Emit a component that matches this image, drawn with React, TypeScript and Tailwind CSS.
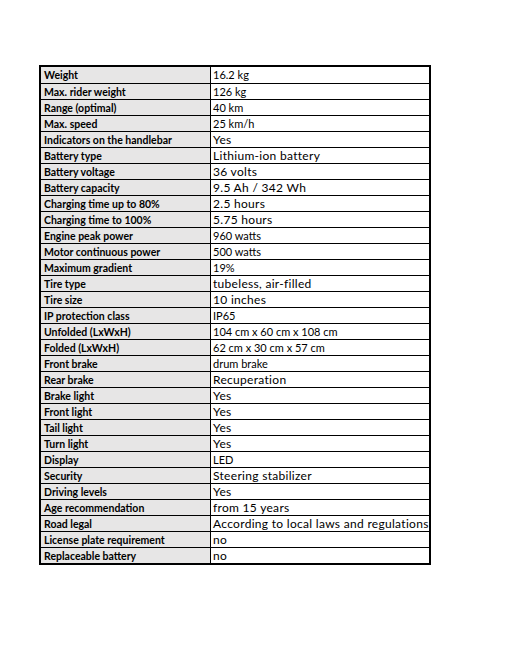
const specs: [string, string, boolean][] = [
  ["Weight", "16.2 kg", false],
  ["Max. rider weight", "126 kg", false],
  ["Range (optimal)", "40 km", false],
  ["Max. speed", "25 km/h", false],
  ["Indicators on the handlebar", "Yes", true],
  ["Battery type", "Lithium-ion battery", true],
  ["Battery voltage", "36 volts", true],
  ["Battery capacity", "9.5 Ah / 342 Wh", true],
  ["Charging time up to 80%", "2.5 hours", true],
  ["Charging time to 100%", "5.75 hours", true],
  ["Engine peak power", "960 watts", false],
  ["Motor continuous power", "500 watts", false],
  ["Maximum gradient", "19%", false],
  ["Tire type", "tubeless, air-filled", true],
  ["Tire size", "10 inches", true],
  ["IP protection class", "IP65", false],
  ["Unfolded (LxWxH)", "104 cm x 60 cm x 108 cm", false],
  ["Folded (LxWxH)", "62 cm x 30 cm x 57 cm", false],
  ["Front brake", "drum brake", false],
  ["Rear brake", "Recuperation", true],
  ["Brake light", "Yes", true],
  ["Front light", "Yes", true],
  ["Tail light", "Yes", true],
  ["Turn light", "Yes", true],
  ["Display", "LED", false],
  ["Security", "Steering stabilizer", true],
  ["Driving levels", "Yes", true],
  ["Age recommendation", "from 15 years", true],
  ["Road legal", "According to local laws and regulations", true],
  ["License plate requirement", "no", true],
  ["Replaceable battery", "no", true],
];

export default function App() {
  return (
    <div className="w-[531px] h-[647px] bg-white pt-[65px] pl-[39px] font-['Lato',sans-serif] text-black">
      <div className="w-[392px] border-2 border-black">
        {specs.map(([label, value, large], i) => (
          <div
            key={label}
            className={`grid grid-cols-[170px_1fr] h-[16px] ${i > 0 ? "border-t border-black" : "h-[15px]"}`}
          >
            <div className="bg-[#e7e6e6] border-r border-black pl-[3px] text-[10.5px] font-bold leading-[16px] whitespace-nowrap overflow-hidden">
              {label}
            </div>
            <div
              className={`pl-[2px] whitespace-nowrap overflow-hidden ${
                large ? "text-[12px] tracking-[0.3px] leading-[15px]" : "text-[11px] leading-[16px]"
              }`}
            >
              {value}
            </div>
          </div>
        ))}
      </div>
    </div>
  );
}
